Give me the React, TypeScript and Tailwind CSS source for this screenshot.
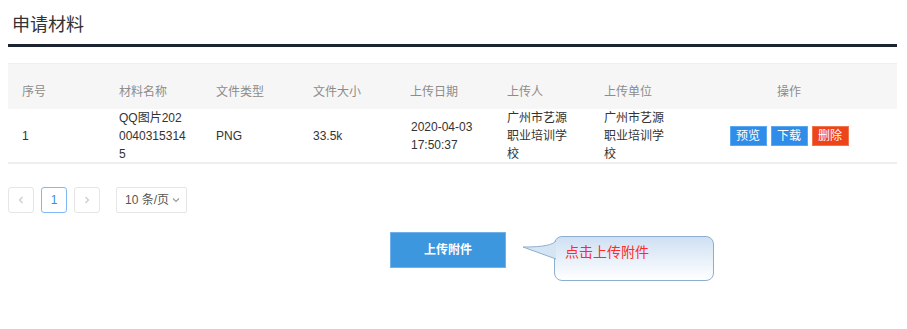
import React from "react";

const font = { fontFamily: '"Liberation Sans", "Noto Sans CJK SC", sans-serif' };

const headers = ["序号", "材料名称", "文件类型", "文件大小", "上传日期", "上传人", "上传单位"];

export default function App() {
  return (
    <div className="w-[907px] h-[329px] bg-white overflow-hidden" style={font}>
      <div className="pl-[8px] w-[897px]">
        <div className="h-[44px] flex items-center pl-[4px] pt-[6px] text-[18px] text-[#333]">申请材料</div>
        <div className="h-[3px] bg-[#1b2430]" />
        <div className="mt-[16px]">
          <div className="flex h-[46px] bg-[#f6f6f6] border-t border-[#efefef] items-end pb-[8px] text-[12px] text-[#8c8c8c] leading-[18px]">
            {headers.map((h) => (
              <div key={h} className="w-[97px] px-[14px]">{h}</div>
            ))}
            <div className="flex-1 text-center pr-[6px]">操作</div>
          </div>
          <div className="flex h-[55px] items-center border-b-2 border-[#eeeeee] text-[12px] text-[#333] leading-[18px]">
            <div className="w-[97px] px-[14px]">1</div>
            <div className="w-[97px] px-[14px] break-all">QQ图片20200403153145</div>
            <div className="w-[97px] px-[14px]">PNG</div>
            <div className="w-[97px] px-[14px]">33.5k</div>
            <div className="w-[97px] px-[14px] pl-[15px] pr-[10px]">2020-04-03 17:50:37</div>
            <div className="w-[97px] px-[14px] break-all">广州市艺源职业培训学校</div>
            <div className="w-[97px] px-[14px] break-all">广州市艺源职业培训学校</div>
            <div className="flex-1 flex justify-center gap-[4px] pr-[6px]">
              <button className="w-[37px] h-[20px] bg-[#2f8ce8] border border-[#5aa8f0] text-white text-[12px] leading-none">预览</button>
              <button className="w-[37px] h-[20px] bg-[#2f8ce8] border border-[#5aa8f0] text-white text-[12px] leading-none">下载</button>
              <button className="w-[37px] h-[20px] bg-[#ee4419] border border-[#f2744f] text-white text-[12px] leading-none">删除</button>
            </div>
          </div>
        </div>
        <div className="mt-[23px] flex items-center gap-[7px] text-[12px]">
          <div className="w-[26px] h-[26px] border border-[#e5e5e5] rounded-[3px] flex items-center justify-center text-[#c8c8c8]">
            <svg width="8" height="8" viewBox="0 0 8 8" fill="none" stroke="currentColor" strokeWidth="1.1"><path d="M5.5 1 L2.5 4 L5.5 7" /></svg>
          </div>
          <div className="w-[26px] h-[26px] border border-[#7fb8f5] rounded-[3px] flex items-center justify-center text-[#3a8ee6]">1</div>
          <div className="w-[26px] h-[26px] border border-[#e5e5e5] rounded-[3px] flex items-center justify-center text-[#c8c8c8]">
            <svg width="8" height="8" viewBox="0 0 8 8" fill="none" stroke="currentColor" strokeWidth="1.1"><path d="M2.5 1 L5.5 4 L2.5 7" /></svg>
          </div>
          <div className="ml-[9px] w-[71px] h-[26px] border border-[#e5e5e5] rounded-[2px] flex items-center pl-[8px] gap-[3px] text-[#555]">
            <span>10 条/页</span>
            <svg width="8" height="8" viewBox="0 0 8 8" fill="none" stroke="#999" strokeWidth="1.1"><path d="M1 2.5 L4 5.5 L7 2.5" /></svg>
          </div>
        </div>
        <div className="mt-[19px] flex items-start pl-[382px]">
          <button className="w-[116px] h-[36px] bg-[#3d97de] border border-[#6fb1e8] text-white text-[12px] font-bold">上传附件</button>
          <div className="relative ml-[48px] mt-[4px] w-[160px] h-[45px] rounded-[8px] border border-[#8eaed0] bg-gradient-to-b from-[#cfe0f3] to-white">
            <svg className="absolute left-[-33px] top-[3px]" width="36" height="22" viewBox="0 0 36 22">
              <path d="M34 1 C30 5 22 7 1 7 L34 19" fill="#d6e5f4" stroke="#8eaed0" strokeWidth="1" />
            </svg>
            <div className="pl-[10px] pt-[5px] text-[14px] text-[#ff2a2a] leading-[20px]">点击上传附件</div>
          </div>
        </div>
      </div>
    </div>
  );
}
